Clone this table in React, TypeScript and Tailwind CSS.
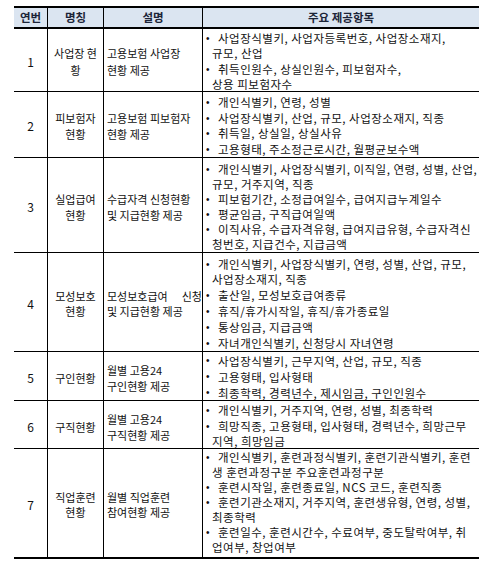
import React from "react";

type Row = {
  no: string;
  name: string[];
  desc: string[];
  descLead: string;
  items: string[][];
  pt: string;
  lead: string;
  gap: string;
  h: string;
  special?: boolean;
};

const rows: Row[] = [
  {
    no: "1",
    name: ["사업장 현", "황"],
    desc: ["고용보험 사업장", "현황 제공"],
    descLead: "leading-[17px]",
    items: [
      ["사업장식별키, 사업자등록번호, 사업장소재지,", "규모, 산업"],
      ["취득인원수, 상실인원수, 피보험자수,", "상용 피보험자수"],
    ],
    pt: "pt-[2px]",
    lead: "leading-[15px]",
    gap: "gap-[1px]",
    h: "h-[63px]",
  },
  {
    no: "2",
    name: ["피보험자", "현황"],
    desc: ["고용보험 피보험자", "현황 제공"],
    descLead: "leading-[16px]",
    items: [
      ["개인식별키, 연령, 성별"],
      ["사업장식별키, 산업, 규모, 사업장소재지, 직종"],
      ["취득일, 상실일, 상실사유"],
      ["고용형태, 주소정근로시간, 월평균보수액"],
    ],
    pt: "pt-[3px]",
    lead: "leading-[15.5px]",
    gap: "gap-0",
    h: "h-[66px]",
  },
  {
    no: "3",
    name: ["실업급여", "현황"],
    desc: ["수급자격 신청현황", "및 지급현황 제공"],
    descLead: "leading-[16px]",
    items: [
      ["개인식별키, 사업장식별키, 이직일, 연령, 성별, 산업,", "규모, 거주지역, 직종"],
      ["피보험기간, 소정급여일수, 급여지급누계일수"],
      ["평균임금, 구직급여일액"],
      ["이직사유, 수급자격유형, 급여지급유형, 수급자격신", "청번호, 지급건수, 지급금액"],
    ],
    pt: "pt-[4px]",
    lead: "leading-[15px]",
    gap: "gap-0",
    h: "h-[95px]",
  },
  {
    no: "4",
    name: ["모성보호", "현황"],
    desc: ["모성보호급여 신청", "및 지급현황 제공"],
    descLead: "leading-[15px]",
    special: true,
    items: [
      ["개인식별키, 사업장식별키, 연령, 성별, 산업, 규모,", "사업장소재지, 직종"],
      ["출산일, 모성보호급여종류"],
      ["휴직/휴가시작일, 휴직/휴가종료일"],
      ["통상임금, 지급금액"],
      ["자녀개인식별키, 신청당시 자녀연령"],
    ],
    pt: "pt-[4px]",
    lead: "leading-[15px]",
    gap: "gap-[1px]",
    h: "h-[99px]",
  },
  {
    no: "5",
    name: ["구인현황"],
    desc: ["월별 고용24", "구인현황 제공"],
    descLead: "leading-[16px]",
    items: [
      ["사업장식별키, 근무지역, 산업, 규모, 직종"],
      ["고용형태, 입사형태"],
      ["최종학력, 경력년수, 제시임금, 구인인원수"],
    ],
    pt: "pt-[1px]",
    lead: "leading-[16px]",
    gap: "gap-0",
    h: "h-[49px]",
  },
  {
    no: "6",
    name: ["구직현황"],
    desc: ["월별 고용24", "구직현황 제공"],
    descLead: "leading-[16px]",
    items: [
      ["개인식별키, 거주지역, 연령, 성별, 최종학력"],
      ["희망직종, 고용형태, 입사형태, 경력년수, 희망근무", "지역, 희망임금"],
    ],
    pt: "pt-[2px]",
    lead: "leading-[15px]",
    gap: "gap-[1px]",
    h: "h-[48px]",
  },
  {
    no: "7",
    name: ["직업훈련", "현황"],
    desc: ["월별 직업훈련", "참여현황 제공"],
    descLead: "leading-[15px]",
    items: [
      ["개인식별키, 훈련과정식별키, 훈련기관식별키, 훈련", "생 훈련과정구분 주요훈련과정구분"],
      ["훈련시작일, 훈련종료일, NCS 코드, 훈련직종"],
      ["훈련기관소재지, 거주지역, 훈련생유형, 연령, 성별,", "최종학력"],
      ["훈련일수, 훈련시간수, 수료여부, 중도탈락여부, 취", "업여부, 창업여부"],
    ],
    pt: "pt-[1px]",
    lead: "leading-[15px]",
    gap: "gap-0",
    h: "h-[110px]",
  },
];

const grid = "grid grid-cols-[34px_56px_99px_276px]";

function Lines({ lines }: { lines: string[] }) {
  return (
    <>
      {lines.map((l, k) => (
        <React.Fragment key={k}>
          {k > 0 && <br />}
          {l}
        </React.Fragment>
      ))}
    </>
  );
}

export default function App() {
  return (
    <div className="w-[489px] h-[571px] bg-white font-['Noto_Sans_CJK_KR','Noto_Sans',sans-serif] text-[#111] text-[11px]">
      <div className="pt-[6px] pl-[14px]">
        <div className="w-[465px] border-t-2 border-black">
          <div className={`${grid} h-[21px] bg-[#dbe5f1] border-b-2 border-black font-bold text-[11.5px] text-[#1b2438]`}>
            <div className="flex items-center justify-center border-r border-black">연번</div>
            <div className="flex items-center justify-center border-r border-black">명칭</div>
            <div className="flex items-center justify-center border-r border-black">설명</div>
            <div className="flex items-center justify-center">주요 제공항목</div>
          </div>
          {rows.map((r, i) => (
            <div
              key={r.no}
              className={`${grid} ${r.h} border-black ${i === rows.length - 1 ? "border-b-2" : "border-b"}`}
            >
              <div className="flex items-center justify-center border-r border-black pt-[3px] text-[12px]">
                {r.no}
              </div>
              <div className={`flex flex-col items-center justify-center border-r border-black pt-[3px] ${r.descLead}`}>
                <p className="whitespace-nowrap text-center">
                  <Lines lines={r.name} />
                </p>
              </div>
              <div className={`flex flex-col justify-center border-r border-black pl-[3px] pt-[3px] ${r.descLead}`}>
                {r.special ? (
                  <p className="whitespace-nowrap">
                    <span className="flex justify-between">
                      <span>모성보호급여</span>
                      <span>신청</span>
                    </span>
                    및 지급현황 제공
                  </p>
                ) : (
                  <p className="whitespace-nowrap">
                    <Lines lines={r.desc} />
                  </p>
                )}
              </div>
              <div className={`flex flex-col pl-[3px] text-[11.5px] tracking-[0.5px] ${r.pt} ${r.gap} ${r.lead}`}>
                {r.items.map((lines, j) => (
                  <div key={j} className="flex">
                    <span className="w-[5px] shrink-0 font-['Liberation_Sans',sans-serif] text-[10px] tracking-normal">•</span>
                    <p className="whitespace-nowrap indent-[6px] pl-[1px]">
                      <Lines lines={lines} />
                    </p>
                  </div>
                ))}
              </div>
            </div>
          ))}
        </div>
      </div>
    </div>
  );
}
